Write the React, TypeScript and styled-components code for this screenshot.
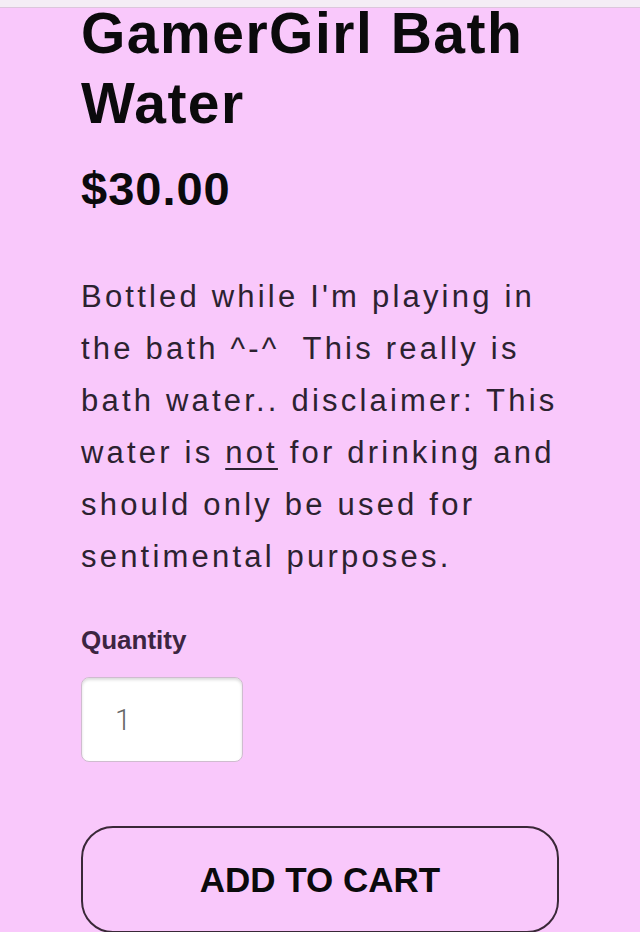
import * as React from "react";
import styled, { createGlobalStyle } from "styled-components";

const GlobalStyle = createGlobalStyle`
  html, body {
    margin: 0;
    padding: 0;
    background: #f9c8fb;
  }
  body {
    font-family: "Liberation Sans", Arial, sans-serif;
  }
`;

export default function App() {
  return (
    <>
      <GlobalStyle />
      <StatusStrip />
      <ProductPage>
        <Title>GamerGirl Bath Water</Title>
        <Price>$30.00</Price>
        <Description>
          Bottled while I'm playing in the bath ^-^&nbsp; This really is bath
          water.. disclaimer: This water is <u>not</u> for drinking and should
          only be used for sentimental purposes.
        </Description>
        <QuantityLabel htmlFor="qty">Quantity</QuantityLabel>
        <QuantityInput id="qty" type="text" defaultValue="1" />
        <CartButton type="button">ADD TO CART</CartButton>
      </ProductPage>
    </>
  );
}

const StatusStrip = styled.div`
  position: fixed;
  top: 0;
  left: 0;
  right: 0;
  height: 7px;
  background: #f4edf5;
  border-bottom: 1px solid #dcc6dc;
  z-index: 10;
`;

const ProductPage = styled.main`
  box-sizing: border-box;
  width: 640px;
  min-height: 932px;
  padding: 0 81px;
  display: flex;
  flex-direction: column;
  align-items: flex-start;
`;

const Title = styled.h1`
  margin: -2px 0 0;
  font-size: 57px;
  line-height: 70px;
  font-weight: 700;
  letter-spacing: 1.5px;
  color: #0b0a0c;
`;

const Price = styled.div`
  margin-top: 24px;
  font-size: 47px;
  line-height: 54px;
  font-weight: 700;
  letter-spacing: 1px;
  color: #0b0a0c;
`;

const Description = styled.p`
  margin: 55px 0 0;
  width: calc(100% + 12px);
  font-size: 31px;
  line-height: 52px;
  letter-spacing: 3.2px;
  color: #2c2230;

  u {
    text-decoration-thickness: 2px;
    text-underline-offset: 5px;
  }
`;

const QuantityLabel = styled.label`
  margin-top: 42px;
  font-size: 26px;
  line-height: 31px;
  font-weight: 700;
  color: #3c2541;
`;

const QuantityInput = styled.input`
  box-sizing: border-box;
  margin-top: 21px;
  width: 162px;
  height: 85px;
  padding: 0 0 0 33px;
  border: 1px solid #cfbccf;
  border-radius: 8px;
  background: #fff;
  box-shadow: inset 0 2px 3px rgba(0, 0, 0, 0.14);
  font-family: Roboto, "Liberation Sans", sans-serif;
  font-weight: 300;
  font-size: 29px;
  color: #666;
  outline: none;
`;

const CartButton = styled.button`
  box-sizing: border-box;
  margin-top: 64px;
  width: 100%;
  height: 107px;
  border: 2px solid #3a2838;
  border-radius: 32px;
  background: transparent;
  font-family: "Liberation Sans", Arial, sans-serif;
  font-size: 35px;
  font-weight: 700;
  color: #0b0a0c;
  cursor: pointer;
`;
